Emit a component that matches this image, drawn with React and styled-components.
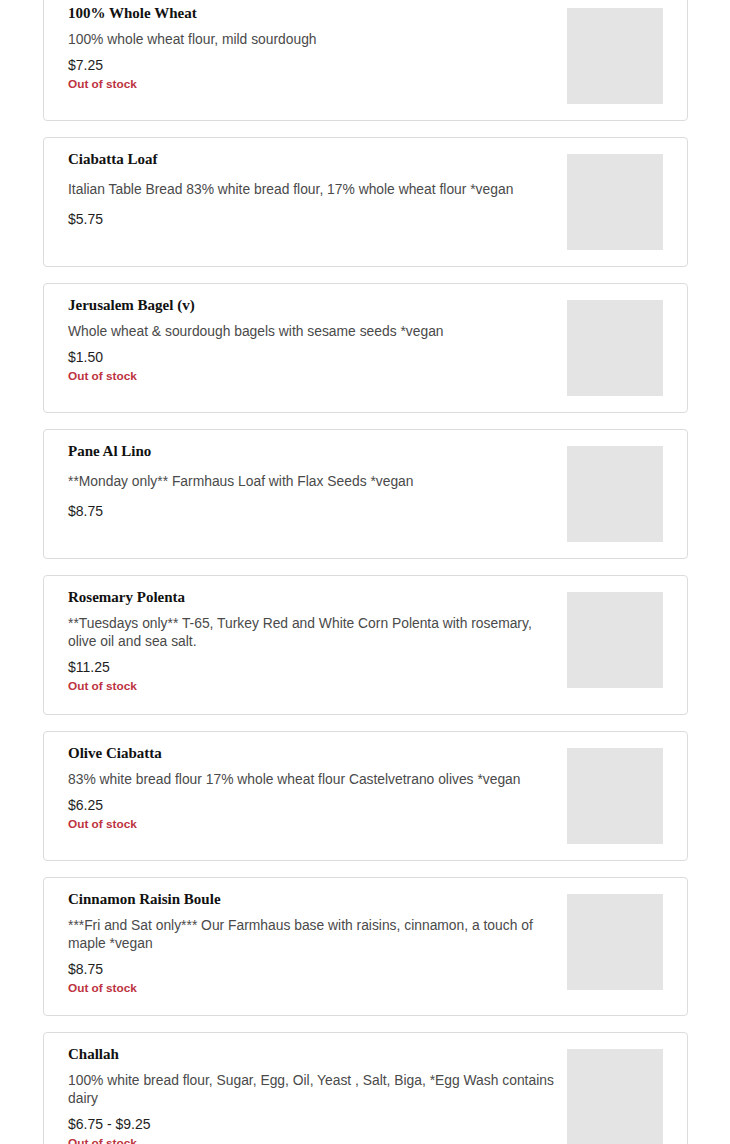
import React from "react";
import styled, { createGlobalStyle } from "styled-components";

const Global = createGlobalStyle`
  html, body { margin: 0; padding: 0; background: #fff; }
  body { font-family: "Liberation Sans", Arial, sans-serif; overflow: hidden; }
`;

const List = styled.div`
  width: 645px;
  margin: -9px 0 0 43px;
  display: flex;
  flex-direction: column;
  gap: 16px;
`;

const Card = styled.div`
  box-sizing: border-box;
  border: 1px solid #dcdcdc;
  border-radius: 4px;
  padding: 12px 24px 16px 24px;
  display: flex;
  align-items: flex-start;
  gap: 12px;
  background: #fff;
`;

const Info = styled.div`
  flex: 1;
  min-width: 0;
  display: flex;
  flex-direction: column;
  gap: ${(p) => (p.$loose ? "12px" : "8px")};
`;

const Title = styled.div`
  font-family: "Liberation Serif", "Times New Roman", serif;
  font-weight: 700;
  font-size: 15px;
  line-height: 18px;
  color: #111;
`;

const Desc = styled.div`
  font-size: 13.85px;
  line-height: 18px;
  color: #4a4a4a;
`;

const PriceBlock = styled.div`
  display: flex;
  flex-direction: column;
  gap: 2px;
  padding-bottom: ${(p) => (p.$oos ? "3.5px" : "0")};
`;

const Price = styled.div`
  font-size: 14px;
  line-height: 18px;
  color: #1e1e1e;
`;

const Stock = styled.div`
  font-size: 11.8px;
  font-weight: 700;
  line-height: 16px;
  color: #bd3340;
`;

const Thumb = styled.div`
  flex: none;
  width: 96px;
  height: 96px;
  margin-top: 4px;
  background: #e4e4e4;
`;

const items = [
  { t: "100% Whole Wheat", d: "100% whole wheat flour, mild sourdough", p: "$7.25", o: true },
  { t: "Ciabatta Loaf", d: "Italian Table Bread 83% white bread flour, 17% whole wheat flour *vegan", p: "$5.75", o: false },
  { t: "Jerusalem Bagel (v)", d: "Whole wheat & sourdough bagels with sesame seeds *vegan", p: "$1.50", o: true },
  { t: "Pane Al Lino", d: "**Monday only** Farmhaus Loaf with Flax Seeds *vegan", p: "$8.75", o: false },
  { t: "Rosemary Polenta", d: "**Tuesdays only** T-65, Turkey Red and White Corn Polenta with rosemary, olive oil and sea salt.", p: "$11.25", o: true },
  { t: "Olive Ciabatta", d: "83% white bread flour 17% whole wheat flour Castelvetrano olives *vegan", p: "$6.25", o: true },
  { t: "Cinnamon Raisin Boule", d: "***Fri and Sat only*** Our Farmhaus base with raisins, cinnamon, a touch of maple *vegan", p: "$8.75", o: true },
  { t: "Challah", d: "100% white bread flour, Sugar, Egg, Oil, Yeast , Salt, Biga, *Egg Wash contains dairy", p: "$6.75 - $9.25", o: true },
];

export default function App() {
  return (
    <>
      <Global />
      <List>
        {items.map((it) => (
          <Card key={it.t}>
            <Info $loose={!it.o}>
              <Title>{it.t}</Title>
              <Desc>{it.d}</Desc>
              <PriceBlock $oos={it.o}>
                <Price>{it.p}</Price>
                {it.o && <Stock>Out of stock</Stock>}
              </PriceBlock>
            </Info>
            <Thumb />
          </Card>
        ))}
      </List>
    </>
  );
}
